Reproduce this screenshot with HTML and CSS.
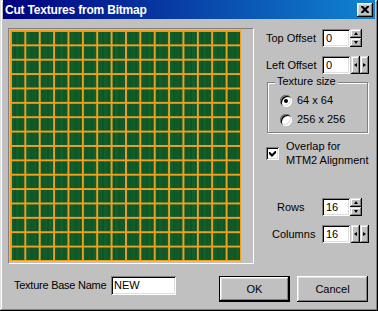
FILE: index.html
```html
<!DOCTYPE html>
<html>
<head>
<meta charset="utf-8">
<title>Cut Textures from Bitmap</title>
<link rel="stylesheet" href="styles.css">
</head>
<body>

<div class="dlg">
    <div class="caption">
        <span class="caption-text">Cut Textures from Bitmap</span>
        <span class="btn-close"><svg width="8" height="7" viewBox="0 0 8 7"><path d="M0 0h2l2 2 2-2h2v1l-2.5 2.5 2.5 2.5v1h-2l-2-2-2 2h-2v-1l2.5-2.5-2.5-2.5z" fill="#000"/></svg></span>
    </div>

    <div class="client">
        <div class="main">
            <div class="preview"><div class="tiles"></div></div>

            <div class="side">
                <div class="field">
                    <span class="lbl">Top Offset</span>
                    <span class="edit">0</span>
                    <span class="spin-v"><span class="sb"><i class="arr-up"></i></span><span class="sb"><i class="arr-dn"></i></span></span>
                </div>
                <div class="field second">
                    <span class="lbl">Left Offset</span>
                    <span class="edit">0</span>
                    <span class="spin-h"><span class="sb"><i class="arr-lt"></i></span><span class="sb"><i class="arr-rt"></i></span></span>
                </div>

                <div class="group">
                    <div class="group-title">Texture size</div>
                    <div class="radio first"><span class="dot on"></span>64 x 64</div>
                    <div class="radio"><span class="dot"></span>256 x 256</div>
                </div>

                <div class="check">
                    <span class="box"><svg width="7" height="7" viewBox="0 0 7 7"><path d="M0 2h1l2 2 3-3h1v2l-4 4-3-3z" fill="#000"/></svg></span>
                    <span>Overlap for<br>MTM2 Alignment</span>
                </div>

                <div class="field rows">
                    <span class="lbl"><span class="rows-lbl">Rows</span></span>
                    <span class="edit">16</span>
                    <span class="spin-v"><span class="sb"><i class="arr-up"></i></span><span class="sb"><i class="arr-dn"></i></span></span>
                </div>
                <div class="field second">
                    <span class="lbl"><span class="cols-lbl">Columns</span></span>
                    <span class="edit">16</span>
                    <span class="spin-h"><span class="sb"><i class="arr-lt"></i></span><span class="sb"><i class="arr-rt"></i></span></span>
                </div>
            </div>
        </div>

        <div class="footer">
            <span class="name-lbl">Texture Base Name</span>
            <span class="edit wide">NEW</span>
            <span class="btns">
                <span class="btn default">OK</span>
                <span class="btn">Cancel</span>
            </span>
        </div>
    </div>
</div>

</body>
</html>
```

FILE: styles.css
```css
* { margin: 0; padding: 0; box-sizing: border-box; }
html, body { width: 378px; height: 311px; overflow: hidden; }
body { background: #c0c0c0; font: 11px/13px "Liberation Sans", Arial, sans-serif; color: #000; }

.dlg { width: 378px; height: 311px; padding: 0 3px 3px 3px; background: #c0c0c0;
       box-shadow: inset -1px -1px #000, inset 1px 1px #dfdfdf, inset -2px -2px #808080, inset 2px 2px #fff; }

/* title bar */
.caption { height: 19px; display: flex; align-items: center; padding: 0 2px; color: #fff;
           background: linear-gradient(to right, #000080, #1084d0); font: bold 12px/14px "Liberation Sans", Arial, sans-serif; }
.caption-text { flex: 1; letter-spacing: -0.2px; }
.btn-close { width: 16px; height: 14px; display: flex; align-items: center; justify-content: center; background: #c0c0c0;
             box-shadow: inset -1px -1px #000, inset 1px 1px #fff, inset -2px -2px #808080, inset 2px 2px #dfdfdf; }
.btn-close svg { display: block; margin-left: -1px; }

.client { padding: 9px 0 0 5px; }
.main { display: flex; height: 236px; }

/* bitmap preview */
.preview { width: 246px; height: 236px; padding: 1px; border: 1px solid; border-color: #808080 #fff #fff #808080; }
.tiles { width: 231px; height: 231px;
         background:
            linear-gradient(90deg, #f29f1e 1.7px, transparent 1.7px) 0 0 / 14.375px 14.375px,
            linear-gradient(#f29f1e 1.7px, transparent 1.7px) 0 0 / 14.375px 14.375px,
            repeating-linear-gradient(90deg, #0f5a28 0 3px, #135f2c 3px 4px, #0d5526 4px 6px, #11602b 6px 9px, #0e5727 9px 11px); }

/* right column */
.side { width: 106px; margin-left: 12px; padding-top: 1px; display: flex; flex-direction: column; }
.field { display: flex; align-items: center; height: 18px; }
.field.second { margin-top: 9px; }
.field.rows { margin-top: 31px; }
.lbl { width: 56px; }
.rows-lbl { margin-left: 11px; }
.cols-lbl { margin-left: 6px; }

.edit { width: 28px; height: 18px; display: flex; align-items: center; padding-left: 4px; background: #fff;
        box-shadow: inset 1px 1px #808080, inset -1px -1px #fff, inset 2px 2px #000, inset -2px -2px #dfdfdf; }
.edit.wide { width: 65px; height: 19px; padding-left: 3px; }

.sb { flex: 1; display: flex; align-items: center; justify-content: center; background: #c0c0c0;
      box-shadow: inset -1px -1px #000, inset 1px 1px #dfdfdf, inset -2px -2px #808080, inset 2px 2px #fff; }
.spin-v { width: 12px; height: 18px; display: flex; flex-direction: column; }
.spin-h { width: 18px; height: 18px; display: flex; margin-left: 1px; }
.arr-up, .arr-dn { width: 1px; height: 0; border-left: 2px solid transparent; border-right: 2px solid transparent; }
.arr-up { border-bottom: 3px solid #000; }
.arr-dn { border-top: 3px solid #000; }
.arr-lt, .arr-rt { width: 0; height: 1px; border-top: 2px solid transparent; border-bottom: 2px solid transparent; }
.arr-lt { border-right: 3px solid #000; }
.arr-rt { border-left: 3px solid #000; }

/* group box */
.group { width: 101px; height: 51px; margin: 8px 0 0 1px; border: 1px solid #808080;
         box-shadow: inset 1px 1px #fff, 1px 1px #fff; }
.group-title { width: fit-content; margin: -8px 0 0 7px; padding: 0 2px; background: #c0c0c0; }
.radio { display: flex; align-items: center; height: 13px; margin-top: 6px; padding-left: 12px; }
.radio.first { margin-top: 6px; }
.dot { width: 12px; height: 12px; margin-right: 5px; border-radius: 50%; background: #fff; display: flex; align-items: center; justify-content: center;
       box-shadow: inset 1px 1px #808080, inset -1px -1px #fff, inset 2px 2px #000, inset -2px -2px #dfdfdf; }
.dot.on::after { content: ""; width: 4px; height: 4px; border-radius: 50%; background: #000; }

/* checkbox */
.check { display: flex; align-items: center; margin-top: 6px; line-height: 14px; }
.box { width: 13px; height: 13px; margin-right: 7px; display: flex; align-items: center; justify-content: center; background: #fff;
       box-shadow: inset 1px 1px #808080, inset -1px -1px #fff, inset 2px 2px #000, inset -2px -2px #dfdfdf; }

/* bottom row */
.footer { display: flex; align-items: flex-start; margin-top: 12px; padding: 0 7px 0 6px; }
.name-lbl { width: 97px; height: 19px; display: flex; align-items: center; letter-spacing: -0.25px; }
.btns { margin-left: auto; display: flex; gap: 7px; }
.btn { width: 71px; height: 26px; display: flex; align-items: center; justify-content: center; background: #c0c0c0;
       box-shadow: inset -1px -1px #000, inset 1px 1px #fff, inset -2px -2px #808080, inset 2px 2px #dfdfdf; }
.btn.default { border: 1px solid #000; }
```
